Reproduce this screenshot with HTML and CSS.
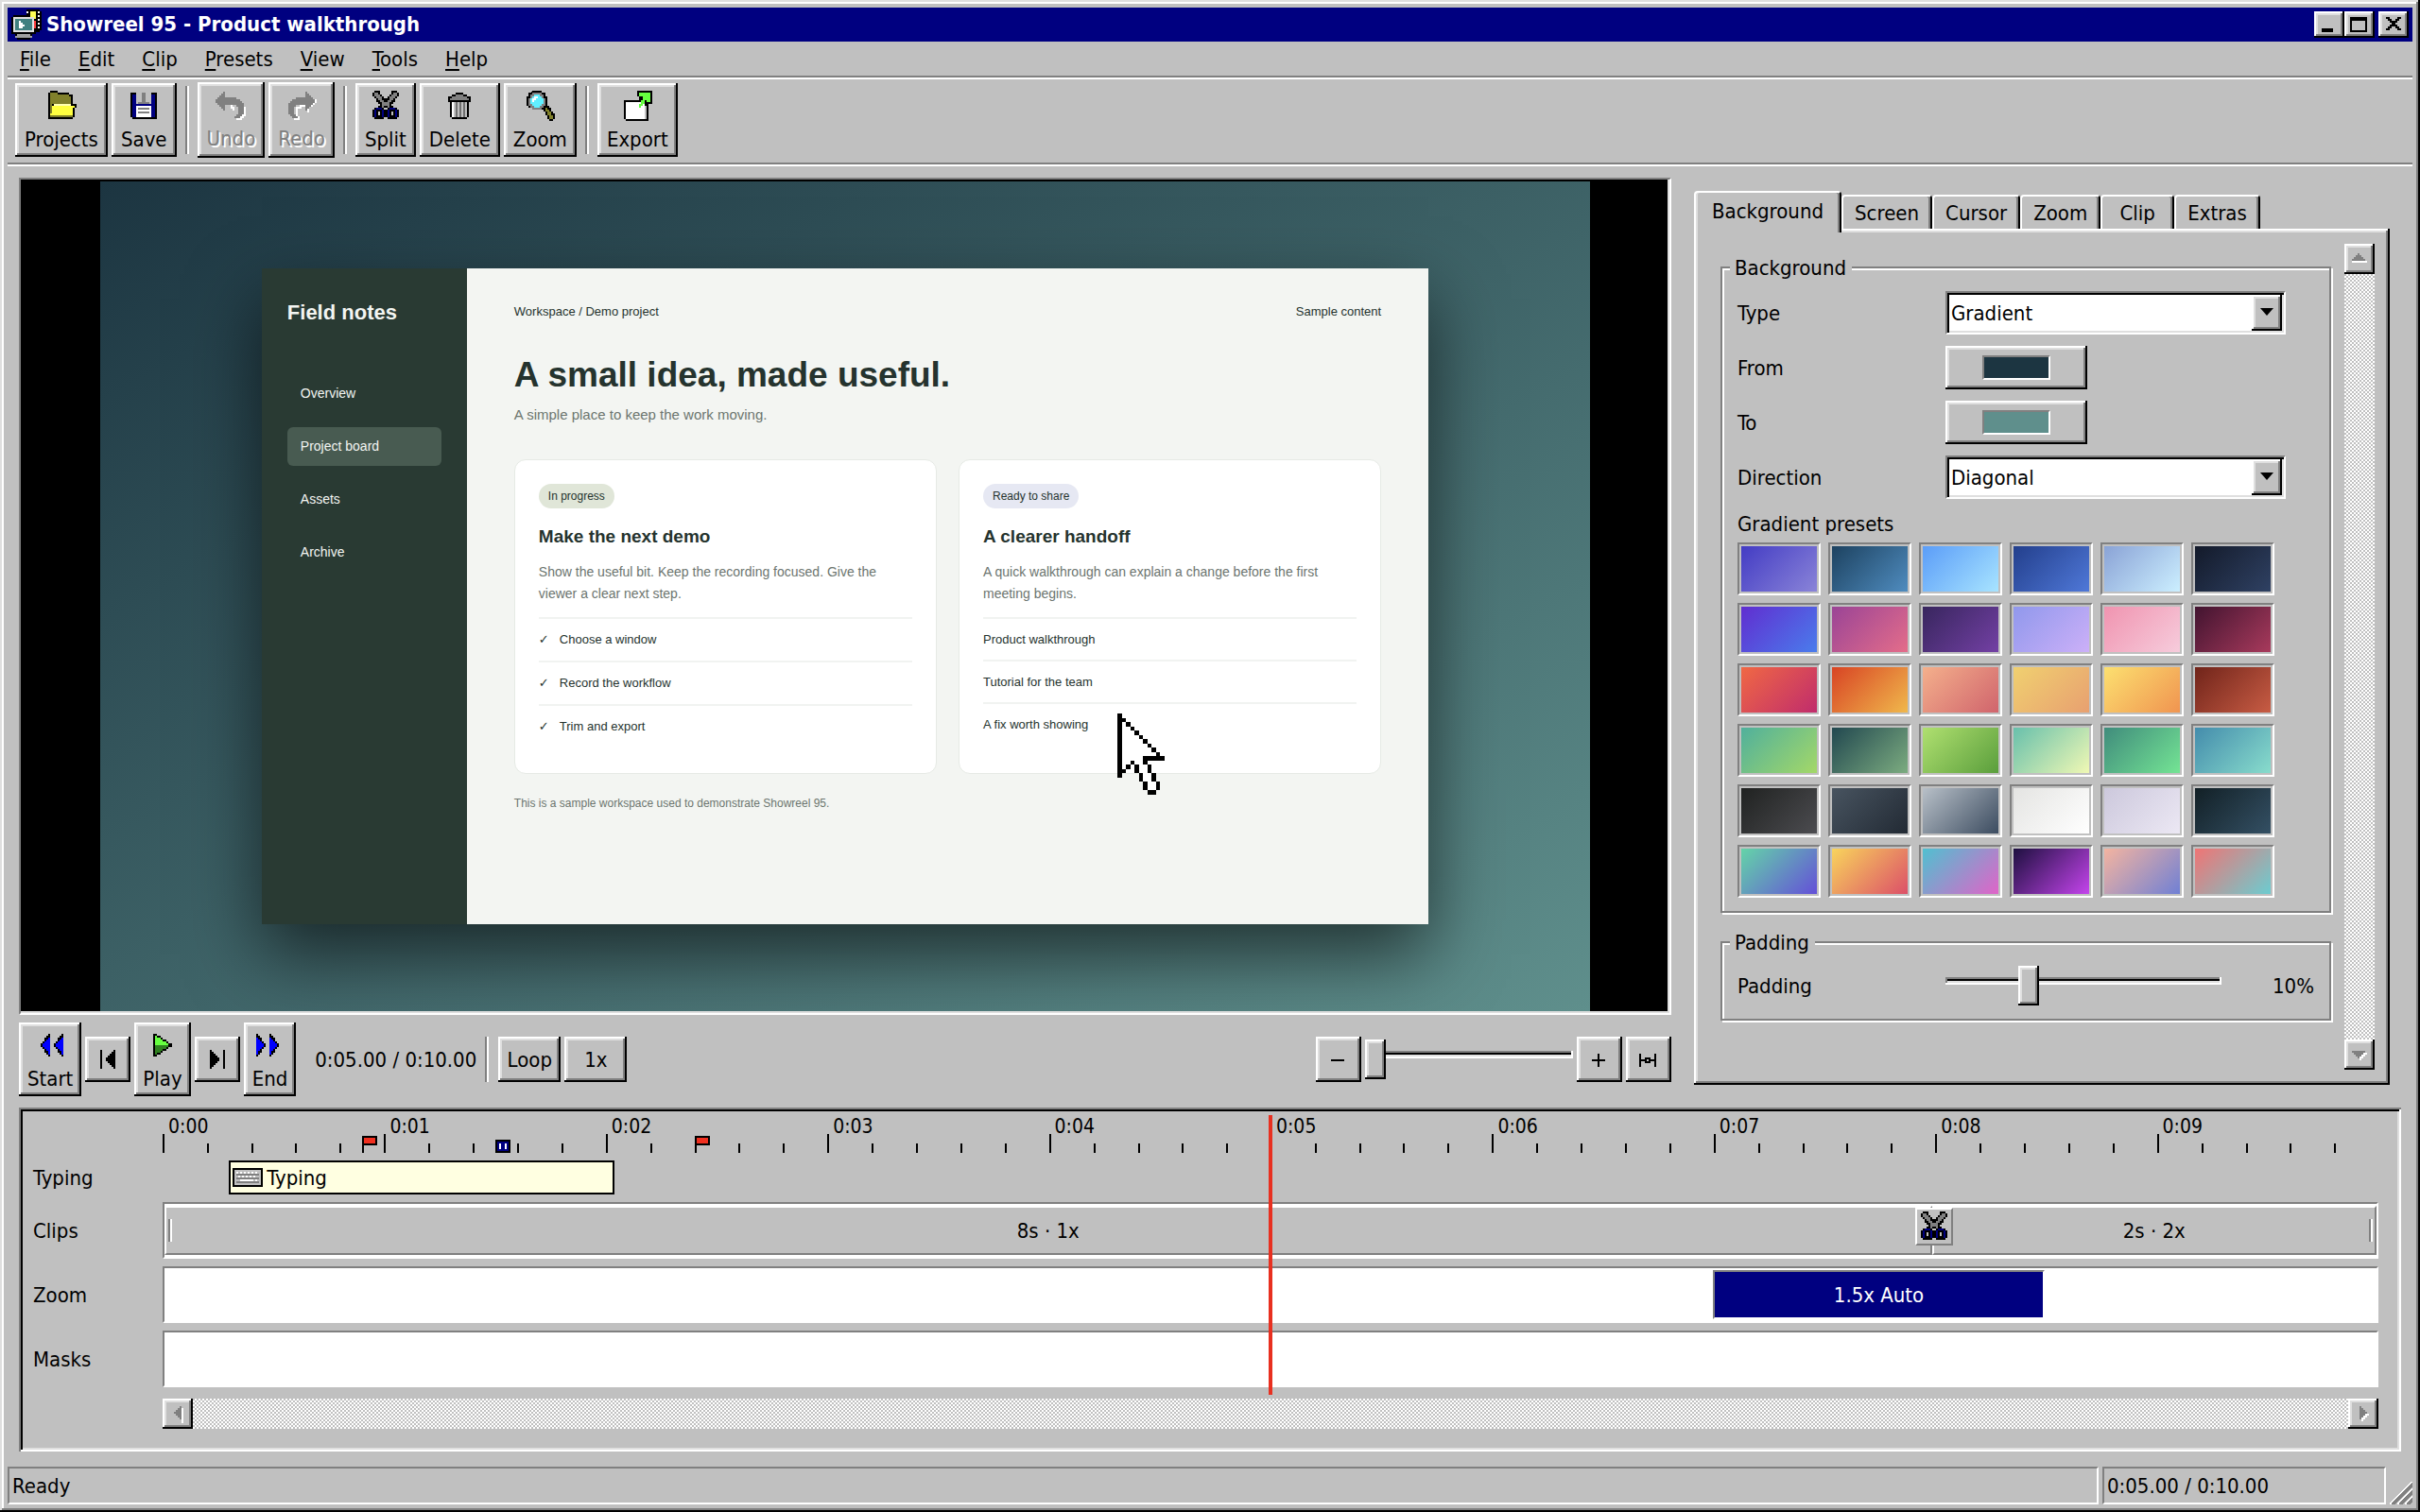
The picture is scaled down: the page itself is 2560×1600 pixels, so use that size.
FILE: index.html
```html
<!DOCTYPE html>
<html lang="en">
<head>
<meta charset="utf-8">
<title>Showreel 95 - Product walkthrough</title>
<link rel="stylesheet" href="styles.css">
</head>
<body>
<svg class="defs" aria-hidden="true">
  <symbol id="scissors" viewBox="0 0 16 16">
    <path fill="#000" d="M2 0h3v1h-3zM11 0h3v1h-3zM1 1h4v1h-4zM11 1h4v1h-4zM1 2h5v1h-5zM10 2h5v1h-5zM2 3h5v1h-5zM9 3h5v1h-5zM3 4h10v2h-10zM4 6h8v1h-8zM5 7h6v1h-6zM4 8h8v1h-8zM2 9h5v1h-5zM9 9h5v1h-5zM1 10h7v4h-7zM8 10h7v4h-7zM2 14h5v1h-5zM9 14h5v1h-5z"/>
    <path fill="#808080" d="M2 1h2v1h-2zM12 1h2v1h-2zM2 2h3v1h-3zM11 2h3v1h-3zM3 3h3v1h-3zM10 3h3v1h-3zM4 4h2v1h-2zM10 4h2v1h-2zM5 5h2v1h-2zM9 5h2v1h-2zM6 6h4v2h-4zM6 8h1v1h-1zM9 8h1v1h-1z"/>
    <path fill="#000080" d="M3 9h3v1h-3zM10 9h3v1h-3zM2 10h5v4h-5zM9 10h5v4h-5z"/>
    <path fill="#000" d="M3 10h3v4h-3zM10 10h3v4h-3z"/>
    <path fill="#c0c0c0" d="M4 11h1v2h-1zM11 11h1v2h-1z"/>
  </symbol>
</svg>
<div class="window">
  <header class="titlebar">
    <svg class="app-icon" viewBox="0 0 16 16" aria-hidden="true">
      <path fill="#000" d="M8 0h7v1h1v10h-1v1h-2v1h-2v2h-1v1h-7v-1h-1v-2h-2v-9h1v-1h7z"/>
      <path fill="#ffff55" d="M10 1h3v4h-3z"/>
      <path fill="#fff" d="M8 1h1v1h-1zM14 1h1v1h-1zM14 3h1v1h-1zM14 5h1v1h-1zM14 7h1v1h-1zM14 9h1v1h-1z"/>
      <path fill="#ff4040" d="M12 6h1v4h-1z"/>
      <path fill="#dfdfdf" d="M1 4h11v8h-11z"/>
      <path fill="#408080" d="M2 5h9v6h-9z"/>
      <path fill="#fff" d="M4 6h1v1h1v1h1v1h-1v1h-2z"/>
      <path fill="#a0a0a0" d="M3 13h7v1h-7zM2 14h9v1h-9z"/>
    </svg>
    <h1 class="window-title">Showreel 95 - Product walkthrough</h1>
    <button class="bevel caption-btn" aria-label="Minimize"><svg viewBox="0 0 16 14"><path d="M4 9h6v2h-6z"/></svg></button>
    <button class="bevel caption-btn" aria-label="Maximize"><svg viewBox="0 0 16 14"><path fill-rule="evenodd" d="M3 3h9v8h-9zM4 5v5h7v-5z"/></svg></button>
    <button class="bevel caption-btn caption-close" aria-label="Close"><svg viewBox="0 0 16 14"><path d="M4 3h2v1h1v1h2v-1h1v-1h2v1h-1v1h-1v1h-1v1h1v1h1v1h1v1h-2v-1h-1v-1h-2v1h-1v1h-2v-1h1v-1h1v-1h1v-1h-1v-1h-1v-1h-1z"/></svg></button>
  </header>

  <nav class="menubar" aria-label="Menu">
    <button><u>F</u>ile</button>
    <button><u>E</u>dit</button>
    <button><u>C</u>lip</button>
    <button><u>P</u>resets</button>
    <button><u>V</u>iew</button>
    <button><u>T</u>ools</button>
    <button><u>H</u>elp</button>
  </nav>

  <div class="toolbar" role="toolbar" aria-label="Main">
    <button class="bevel tool">
      <svg viewBox="0 0 16 16" aria-hidden="true"><path d="M1 1h1v-1h4v1h6v1h2v5h2v2h-1v5h-1v1h-13z"/><path fill="#80802b" d="M2 2v-1h4v1h6v1h1v4h-10v1h-1zM2 8h1v6h-1z"/><path fill="#ffff40" d="M3 8h12v1h-1v4h-12v-1h1z"/><path fill="#ffffb0" d="M4 7h9v1h-9z"/><path fill="#80802b" d="M2 13h12v1h-12z"/></svg>
      <span>Projects</span></button>
    <button class="bevel tool">
      <svg viewBox="0 0 16 16" aria-hidden="true"><path d="M1 1h14v14h-13v-1h-1z"/><path fill="#000080" d="M2 2h12v12h-12z"/><path fill="#c0c0c0" d="M4 1h8v6h-8z"/><path fill="#808080" d="M7 1h2v5h-2zM5 6h6v1h-6z"/><path fill="#fff" d="M4 8h8v6h-8z"/><path fill="#808080" d="M5 9h6v1h-6zM5 11h6v1h-6z"/></svg>
      <span>Save</span></button>
    <span class="divider"></span>
    <button class="bevel tool tool-off" disabled>
      <svg viewBox="0 0 16 16" aria-hidden="true"><path fill="#fff" d="M12 7h2v1h1v1h1v5h-1v1h-1v1h-3v-1h2v-1h1v-5h-2v-1h-3v1h1v2h-1v-1h-1v-2h2z"/><path fill="#808080" d="M4 1h1v3h6v1h2v1h1v1h1v6h-1v1h-1v1h-3v-1h1v-1h1v-4h-1v-1h-6v3h-1v-1h-1v-1h-1v-1h-1v-1h-1v-2h1v-1h1v-1h1v-1h1z"/></svg>
      <span>Undo</span></button>
    <button class="bevel tool tool-off" disabled>
      <svg viewBox="0 0 16 16" aria-hidden="true"><path fill="#fff" d="M15 5h1v2h-1v1h-1v1h-1v1h-1v2h-1v-3h-3v1h-2v4h1v2h-3v-1h1v-6h2v-1h4v2h2v-2z"/><path fill="#808080" d="M11 1h-1v3h-5v1h-2v1h-1v1h-1v6h1v1h1v1h3v-1h-1v-1h-1v-4h1v-1h5v3h1v-1h1v-1h1v-1h1v-1h1v-2h-1v-1h-1v-1h-1v-1h-1z"/></svg>
      <span>Redo</span></button>
    <span class="divider"></span>
    <button class="bevel tool"><svg aria-hidden="true"><use href="#scissors"/></svg><span>Split</span></button>
    <button class="bevel tool">
      <svg viewBox="0 0 16 16" aria-hidden="true"><path d="M6 1h4v1h2v1h2v3h-1v8h-1v1h-8v-1h-1v-8h-1v-3h2v-1h2z"/><path fill="#808080" d="M6 2h4v1h2v1h1v1h-10v-1h1v-1h2z"/><path fill="#c0c0c0" d="M4 6h8v8h-8z"/><path fill="#fff" d="M4 6h1v8h-1z"/><path fill="#707070" d="M6 6h1v8h-1zM8 6h1v8h-1zM10 6h1v8h-1z"/></svg>
      <span>Delete</span></button>
    <button class="bevel tool">
      <svg viewBox="0 0 16 16" aria-hidden="true"><path d="M4 0h5v1h2v2h1v5h1v1h1v2h1v1h1v3h-1v1h-2v-1h-1v-2h-1v-2h-1v-1h-6v-1h-2v-1h-1v-5h1v-2h1z"/><path fill="#808080" d="M4 1h5v1h1v2h1v4h-1v1h-1v1h-5v-1h-1v-1h-1v-4h1v-2h1z"/><path fill="#60f0ff" d="M5 2h3v1h1v1h1v3h-1v1h-1v1h-3v-1h-1v-1h-1v-3h1v-1h1z"/><path fill="#fff" d="M4 4h1v-1h2v1h-1v1h-1v1h-1z"/><path fill="#80802b" d="M11 9h1v1h1v1h1v2h1v2h-2v-2h-1v-2h-1z"/></svg>
      <span>Zoom</span></button>
    <span class="divider"></span>
    <button class="bevel tool">
      <svg viewBox="0 0 16 16" aria-hidden="true"><path d="M8 0h8v7h-2v9h-12v-1h-1v-10h8v-2h-1z"/><path fill="#fff" d="M2 6h10v9h-10z"/><path fill="#c0c0c0" d="M12 8h1v7h-1z"/><path fill="#66ff40" d="M9 1h6v5h-2v-1h-1v2h-1v1h-1v1h-1v-2h1v-2h1v-2h-2z"/></svg>
      <span>Export</span></button>
  </div>

  <main class="workspace">
    <section class="stage" aria-label="Preview">
      <div class="preview">
        <div class="video">
          <div class="demo">
            <aside class="demo-side">
              <strong>Field notes</strong>
              <ul><li>Overview</li><li class="on">Project board</li><li>Assets</li><li>Archive</li></ul>
            </aside>
            <div class="demo-main">
              <div class="crumbs"><span>Workspace / Demo project</span><span>Sample content</span></div>
              <h2>A small idea, made useful.</h2>
              <p class="lead">A simple place to keep the work moving.</p>
              <div class="cards">
                <article class="card">
                  <span class="chip">In progress</span>
                  <h3>Make the next demo</h3>
                  <p>Show the useful bit. Keep the recording focused. Give the viewer a clear next step.</p>
                  <ul class="checks"><li>Choose a window</li><li>Record the workflow</li><li>Trim and export</li></ul>
                </article>
                <article class="card">
                  <span class="chip chip-blue">Ready to share</span>
                  <h3>A clearer handoff</h3>
                  <p>A quick walkthrough can explain a change before the first meeting begins.</p>
                  <ul><li>Product walkthrough</li><li>Tutorial for the team</li><li>A fix worth showing</li></ul>
                </article>
              </div>
              <p class="foot">This is a sample workspace used to demonstrate Showreel 95.</p>
            </div>
          </div>
          <svg class="pointer" viewBox="0 0 11 19" aria-hidden="true">
            <path fill="#fff" d="M0 0h1v1h1v1h1v1h1v1h1v1h1v1h1v1h1v1h1v1h1v1h1v1h-4v1h1v2h1v2h1v2h-1v1h-2v-1h-1v-2h-1v-2h-1v-2h-1v1h-1v1h-1v1h-1z"/>
            <path d="M0 0h1v15h-1zM1 1h1v1h-1zM2 2h1v1h-1zM3 3h1v1h-1zM4 4h1v1h-1zM5 5h1v1h-1zM6 6h1v1h-1zM7 7h1v1h-1zM8 8h1v1h-1zM9 9h1v1h-1zM6 10h5v1h-5zM6 11h1v1h-1zM3 11h1v1h-1zM2 12h1v1h-1zM1 13h1v1h-1zM4 12h1v2h-1zM7 12h1v2h-1zM5 14h1v2h-1zM8 14h1v2h-1zM6 16h1v2h-1zM9 16h1v2h-1zM7 18h2v1h-2z"/>
          </svg>
        </div>
      </div>

      <div class="transport">
        <button class="bevel tool"><svg viewBox="0 0 16 16" aria-hidden="true"><path d="M7 2h1v12h-1v-1h-1v-1h-1v-2h-1v-1h-1v-2h1v-1h1v-2h1v-1h1zM14 2h1v12h-1v-1h-1v-1h-1v-2h-1v-1h-1v-2h1v-1h1v-2h1v-1h1z"/><path fill="#00f" d="M7 4h1v9h-1v-2h-1v-1h-1v-1h-1v-2h1v-1h1v-1h1zM14 4h1v9h-1v-2h-1v-1h-1v-1h-1v-2h1v-1h1v-1h1z"/></svg><span>Start</span></button>
        <button class="bevel step" aria-label="Previous frame"><svg viewBox="0 0 16 16"><path d="M4 3h1v10h-1zM11 3h1v10h-1v-1h-1v-1h-1v-1h-1v-1h-1v-2h1v-1h1v-1h1v-1h1z"/></svg></button>
        <button class="bevel tool"><svg viewBox="0 0 16 16" aria-hidden="true"><path d="M3 2h2v1h2v1h1v1h2v1h1v1h2v2h-2v1h-1v1h-2v1h-1v1h-2v1h-2z"/><path fill="#66ff40" d="M4 3h1v1h2v1h1v1h2v1h1v1h-7z"/><path fill="#2f8020" d="M4 8h7v1h-1v1h-2v1h-1v1h-2v1h-1z"/></svg><span>Play</span></button>
        <button class="bevel step" aria-label="Next frame"><svg viewBox="0 0 16 16"><path d="M11 3h1v10h-1zM4 3h1v1h1v1h1v1h1v1h1v2h-1v1h-1v1h-1v1h-1v1h-1z"/></svg></button>
        <button class="bevel tool"><svg viewBox="0 0 16 16" aria-hidden="true"><path d="M1 2h1v1h1v1h1v2h1v1h1v2h-1v1h-1v2h-1v1h-1v1h-1zM8 2h1v1h1v1h1v2h1v1h1v2h-1v1h-1v2h-1v1h-1v1h-1z"/><path fill="#00f" d="M1 4h1v1h1v1h1v1h1v2h-1v1h-1v1h-1v2h-1zM8 4h1v1h1v1h1v1h1v2h-1v1h-1v1h-1v2h-1z"/></svg><span>End</span></button>
        <output class="time">0:05.00 / 0:10.00</output>
        <span class="divider"></span>
        <button class="bevel wide">Loop</button>
        <button class="bevel wide">1x</button>
        <span class="spacer"></span>
        <button class="bevel step" aria-label="Zoom out timeline"><svg viewBox="0 0 16 16"><path d="M4 8h7v1h-7z"/></svg></button>
        <input class="slider" type="range" aria-label="Timeline zoom" min="0" max="100" value="0">
        <button class="bevel step" aria-label="Zoom in timeline"><svg viewBox="0 0 16 16"><path d="M4 8h7v1h-7zM7 5h1v7h-1z"/></svg></button>
        <button class="bevel step" aria-label="Fit timeline"><svg viewBox="0 0 16 16"><path fill-rule="evenodd" d="M3 5h1v3h2v-1h3v1h2v-3h1v7h-1v-3h-2v1h-3v-1h-2v3h-1zM7 8v1h1v-1z"/></svg></button>
      </div>
    </section>

    <section class="inspector" aria-label="Properties">
      <div class="tabs" role="tablist">
        <button role="tab" aria-selected="true" class="tab">Background</button>
        <button role="tab" aria-selected="false" class="tab">Screen</button>
        <button role="tab" aria-selected="false" class="tab">Cursor</button>
        <button role="tab" aria-selected="false" class="tab">Zoom</button>
        <button role="tab" aria-selected="false" class="tab">Clip</button>
        <button role="tab" aria-selected="false" class="tab">Extras</button>
      </div>
      <div class="bevel sheet" role="tabpanel">
        <div class="groups">
          <fieldset>
            <legend>Background</legend>
            <div class="field">
              <label for="type">Type</label>
              <span class="combo"><select id="type"><option>Gradient</option></select><span class="bevel combo-btn"></span></span>
            </div>
            <div class="field">
              <label for="from">From</label>
              <button id="from" class="bevel color-btn"><span style="background:#1c3541"></span></button>
            </div>
            <div class="field">
              <label for="to">To</label>
              <button id="to" class="bevel color-btn"><span style="background:#5f8f8c"></span></button>
            </div>
            <div class="field">
              <label for="direction">Direction</label>
              <span class="combo"><select id="direction"><option>Diagonal</option></select><span class="bevel combo-btn"></span></span>
            </div>
            <div class="presets">
              <span>Gradient presets</span>
              <div class="swatches">
                <button aria-label="Preset 1" style="--a:#433cc4;--b:#8a84d8"></button>
                <button aria-label="Preset 2" style="--a:#1d4260;--b:#4f8cbf"></button>
                <button aria-label="Preset 3" style="--a:#5b9df8;--b:#a8e4ff"></button>
                <button aria-label="Preset 4" style="--a:#233f8c;--b:#4f78d8"></button>
                <button aria-label="Preset 5" style="--a:#8aa3d6;--b:#ccefff"></button>
                <button aria-label="Preset 6" style="--a:#131a2a;--b:#2f4163"></button>
                <button aria-label="Preset 7" style="--a:#602ed0;--b:#4a7cec"></button>
                <button aria-label="Preset 8" style="--a:#9a4496;--b:#e46d8a"></button>
                <button aria-label="Preset 9" style="--a:#38265e;--b:#7340a4"></button>
                <button aria-label="Preset 10" style="--a:#9098ec;--b:#ccb0f8"></button>
                <button aria-label="Preset 11" style="--a:#f094b0;--b:#f6ccdc"></button>
                <button aria-label="Preset 12" style="--a:#421430;--b:#a83a5c"></button>
                <button aria-label="Preset 13" style="--a:#f06844;--b:#c02c6c"></button>
                <button aria-label="Preset 14" style="--a:#d84424;--b:#f0b84c"></button>
                <button aria-label="Preset 15" style="--a:#f4b08c;--b:#d0646c"></button>
                <button aria-label="Preset 16" style="--a:#f0d070;--b:#e8a070"></button>
                <button aria-label="Preset 17" style="--a:#fce070;--b:#f09450"></button>
                <button aria-label="Preset 18" style="--a:#70241a;--b:#c85c44"></button>
                <button aria-label="Preset 19" style="--a:#50b09c;--b:#a4d868"></button>
                <button aria-label="Preset 20" style="--a:#224850;--b:#7cac80"></button>
                <button aria-label="Preset 21" style="--a:#b0e070;--b:#5a9e3c"></button>
                <button aria-label="Preset 22" style="--a:#68c0ac;--b:#f0f8b4"></button>
                <button aria-label="Preset 23" style="--a:#408c7c;--b:#74e494"></button>
                <button aria-label="Preset 24" style="--a:#448cac;--b:#88dccc"></button>
                <button aria-label="Preset 25" style="--a:#202221;--b:#4c4c50"></button>
                <button aria-label="Preset 26" style="--a:#485460;--b:#222a34"></button>
                <button aria-label="Preset 27" style="--a:#b8c0c8;--b:#3c4c60"></button>
                <button aria-label="Preset 28" style="--a:#e4e4e2;--b:#ffffff"></button>
                <button aria-label="Preset 29" style="--a:#ccc8dc;--b:#ece8f4"></button>
                <button aria-label="Preset 30" style="--a:#122026;--b:#345064"></button>
                <button aria-label="Preset 31" style="--a:#64d4a8;--b:#6450d8"></button>
                <button aria-label="Preset 32" style="--a:#f8d45c;--b:#dc5068"></button>
                <button aria-label="Preset 33" style="--a:#50c0d0;--b:#e064c8"></button>
                <button aria-label="Preset 34" style="--a:#1e1040;--b:#c444ec"></button>
                <button aria-label="Preset 35" style="--a:#f4b4a0;--b:#7080d4"></button>
                <button aria-label="Preset 36" style="--a:#f07474;--b:#6cccd0"></button>
              </div>
            </div>
          </fieldset>
          <fieldset>
            <legend>Padding</legend>
            <div class="field">
              <label for="padding">Padding</label>
              <input id="padding" class="slider" type="range" min="0" max="35" value="10">
              <output for="padding">10%</output>
            </div>
          </fieldset>
        </div>
        <div class="scroll scroll-y">
          <button class="bevel" aria-label="Scroll up" disabled><svg viewBox="0 0 16 16"><path fill="#fff" d="M4 9h8v1h-8z"/><path fill="#808080" d="M7 5h1v1h1v1h1v1h1v1h-7v-1h1v-1h1v-1h1z"/></svg></button>
          <button class="bevel" aria-label="Scroll down" disabled><svg viewBox="0 0 16 16"><path fill="#fff" d="M5 7h7v1h-1v1h-1v1h-1v1h-1v-1z"/><path fill="#808080" d="M4 6h7v1h-1v1h-1v1h-1v1h-1v-1h-1v-1h-1v-1h-1z"/></svg></button>
        </div>
      </div>
    </section>
  </main>

  <section class="timeline" aria-label="Timeline">
    <div class="ruler">
      <span>0:00</span><span>0:01</span><span>0:02</span><span>0:03</span><span>0:04</span><span>0:05</span><span>0:06</span><span>0:07</span><span>0:08</span><span>0:09</span>
      <svg class="flag" style="left:9%" viewBox="0 0 8 9" aria-hidden="true"><path d="M0 0h8v5h-7v4h-1z"/><path fill="#f03020" d="M1 1h6v3h-6z"/></svg>
      <svg class="flag" style="left:24%" viewBox="0 0 8 9" aria-hidden="true"><path d="M0 0h8v5h-7v4h-1z"/><path fill="#f03020" d="M1 1h6v3h-6z"/></svg>
      <svg class="pause" style="left:15%" viewBox="0 0 8 7" aria-hidden="true"><path d="M0 0h8v7h-8z"/><path fill="#000080" d="M1 1h6v5h-6z"/><path fill="#fff" d="M2 2h1v3h-1zM5 2h1v3h-1z"/></svg>
    </div>

    <span class="lane-name">Typing</span>
    <div class="lane-open">
      <div class="typing" style="margin-left:3%;width:17.4%">
        <svg viewBox="0 0 16 10" aria-hidden="true"><path d="M0 0h16v10h-16z"/><path fill="#c0c0c0" d="M1 1h14v8h-14z"/><path fill="#808080" d="M2 3h12v1h-12zM2 5h12v1h-12zM2 7h12v1h-12z"/><path fill="#fff" d="M2 2h1v1h-1zM4 2h1v1h-1zM6 2h1v1h-1zM8 2h1v1h-1zM10 2h1v1h-1zM12 2h1v1h-1zM3 4h1v1h-1zM5 4h1v1h-1zM7 4h1v1h-1zM9 4h1v1h-1zM11 4h1v1h-1zM4 6h7v1h-7zM12 6h1v1h-1z"/></svg>
        <span>Typing</span>
      </div>
    </div>

    <span class="lane-name">Clips</span>
    <div class="lane lane-clips">
      <div class="clip" style="flex-grow:8"><i class="grip"></i><span>8s · 1x</span></div>
      <div class="clip" style="flex-grow:2"><button class="cut" aria-label="Cut at 8 seconds"><svg aria-hidden="true"><use href="#scissors"/></svg></button><span>2s · 2x</span><i class="grip grip-end"></i></div>
    </div>

    <span class="lane-name">Zoom</span>
    <div class="lane">
      <div class="zoom-clip" style="margin-left:70%;width:15%">1.5x Auto</div>
    </div>

    <span class="lane-name">Masks</span>
    <div class="lane"></div>

    <div class="scroll scroll-x">
      <button class="bevel" aria-label="Scroll left" disabled><svg viewBox="0 0 16 16"><path fill="#fff" d="M10 5h1v8h-1z"/><path fill="#808080" d="M9 4h1v7h-1v-1h-1v-1h-1v-1h-1v-1h1v-1h1v-1h1z"/></svg></button>
      <button class="bevel" aria-label="Scroll right" disabled><svg viewBox="0 0 16 16"><path fill="#fff" d="M7 12h1v-1h1v-1h1v-1h1v-1h-1v-1h-3z"/><path fill="#808080" d="M6 4h1v1h1v1h1v1h1v1h-1v1h-1v1h-1v1h-1z"/></svg></button>
    </div>
    <div class="playhead-layer"><i class="playhead" style="left:50%"></i></div>
  </section>

  <footer class="statusbar">
    <span class="status-text">Ready</span>
    <span class="status-time">0:05.00 / 0:10.00</span>
    <svg class="resize" viewBox="0 0 12 12" aria-hidden="true"><path stroke="#fff" d="M0 12L12 0M4 12L12 4M8 12L12 8"/><path stroke="#808080" d="M1 12L12 1M2 12L12 2M5 12L12 5M6 12L12 6M9 12L12 9M10 12L12 10"/></svg>
  </footer>
</div>
</body>
</html>
```
FILE: styles.css
```css
:root {
  --face: #c0c0c0;
  --light: #dfdfdf;
  --shade: #808080;
  --navy: #000080;
}

* { box-sizing: border-box; }

body {
  margin: 0;
  background: var(--face);
  color: #000;
  font: 22px/28px "DejaVu Sans Condensed", Tahoma, "Noto Sans", sans-serif;
}

button, input, select, output { font: inherit; color: inherit; }
button { margin: 0; border: 0; padding: 0; background: none; }
h1, h2, h3, p, ul { margin: 0; padding: 0; font-size: inherit; }
ul { list-style: none; }
svg { display: block; shape-rendering: crispEdges; }
.defs { display: none; }

.window {
  display: flex;
  flex-direction: column;
  min-height: 100vh;
  padding: 8px;
  box-shadow: inset -2px -2px #000, inset 2px 2px var(--light), inset -4px -4px var(--shade), inset 4px 4px #fff;
}

.bevel {
  background: var(--face);
  box-shadow: inset -2px -2px #000, inset 2px 2px #fff, inset -4px -4px var(--shade), inset 4px 4px var(--light);
}

.divider {
  width: 4px;
  border-left: 2px solid var(--shade);
  border-right: 2px solid #fff;
}

/* Title bar */
.titlebar {
  display: flex;
  align-items: center;
  height: 36px;
  padding: 0 4px;
  background: var(--navy);
  color: #fff;
}
.app-icon { width: 32px; height: 32px; }
.window-title { flex: 1; padding-left: 5px; font-weight: bold; }
.caption-btn { width: 32px; height: 28px; }
.caption-btn svg { width: 32px; height: 28px; }
.caption-close { margin-left: 4px; }

/* Menu bar */
.menubar {
  display: flex;
  height: 40px;
  border-bottom: 2px solid #fff;
  box-shadow: inset 0 -2px var(--shade);
}
.menubar button { padding: 0 16px 0 13px; }
.menubar u { text-underline-offset: 3px; text-decoration-thickness: 2px; }

/* Toolbar */
.toolbar {
  display: flex;
  align-items: center;
  gap: 4px;
  height: 92px;
  padding: 0 8px 4px;
  border-bottom: 2px solid #fff;
  box-shadow: inset 0 -2px var(--shade);
}
.toolbar .divider { height: 72px; margin: 0 5px; }
.tool {
  display: flex;
  flex-direction: column;
  align-items: center;
  gap: 6px;
  height: 78px;
  padding: 8px 10px 0;
}
.tool svg { width: 32px; height: 32px; }
.tool-off { height: 80px; color: var(--shade); text-shadow: 2px 2px #fff; }

/* Workspace */
.workspace {
  display: grid;
  grid-template-columns: minmax(0, 1fr) 736px;
  gap: 24px;
  flex: 1;
  padding: 12px 24px 12px 12px;
}
.stage { display: flex; flex-direction: column; gap: 8px; }
.preview {
  display: flex;
  justify-content: center;
  flex: 1;
  border: 2px solid;
  border-color: var(--shade) #fff #fff var(--shade);
  padding: 2px;
  background: #000;
  box-shadow: inset -2px -2px var(--light);
}
.video {
  position: relative;
  display: grid;
  place-content: center;
  grid-template: 79% / 78.3%;
  width: 90.6%;
  background: linear-gradient(to bottom right, #1c3541, #5f8f8c);
  overflow: hidden;
}
.demo {
  display: grid;
  grid-template-columns: 217px 1fr;
  background: #f3f5f2;
  color: #25332e;
  font: 13px/20px "Liberation Sans", Arial, sans-serif;
  box-shadow: 0 32px 72px rgba(0, 0, 0, .6);
}
.demo-side { padding: 32px 27px; background: #293a33; color: #f3f5f2; }
.demo-side strong { font-size: 22px; line-height: 30px; }
.demo-side ul { display: grid; gap: 15px; margin-top: 50px; font-size: 14px; line-height: 41px; }
.demo-side li { padding-left: 14px; border-radius: 6px; }
.demo-side .on { background: #485b51; }
.demo-main { padding: 36px 50px; }
.crumbs { display: flex; justify-content: space-between; }
.demo h2 { margin-top: 34px; font-size: 37px; line-height: 46px; }
.lead { margin-top: 9px; font-size: 15px; line-height: 20px; color: #6c756f; }
.cards { display: grid; grid-template-columns: 1fr 1fr; gap: 23px; margin-top: 37px; }
.card {
  height: 333px;
  padding: 25px;
  border: 1px solid #e6eae5;
  border-radius: 12px;
  background: #fff;
}
.chip {
  display: inline-block;
  padding: 0 10px;
  border-radius: 13px;
  background: #e0e6d8;
  font-size: 12px;
  line-height: 26px;
}
.chip-blue { background: #e6e8f3; }
.card h3 { margin-top: 16px; font-size: 19px; line-height: 28px; }
.card p { margin-top: 12px; font-size: 14px; line-height: 23px; color: #6c756f; }
.card ul { margin-top: 13px; }
.card li { border-top: 2px solid #f1f3f1; line-height: 43px; }
.checks li::before {
  content: "✓";
  display: inline-block;
  width: 22px;
  font-family: "DejaVu Sans", sans-serif;
  font-weight: bold;
  line-height: 20px;
}
.card .checks li { line-height: 44px; }
.foot { margin-top: 21px; font-size: 12px; color: #6c756f; }
.pointer { position: absolute; left: 68.3%; top: 64.1%; width: 50px; height: 86px; }

.transport { display: flex; align-items: center; gap: 4px; height: 78px; }
.transport .tool { padding: 8px 9px 0; }
.step { width: 48px; height: 48px; }
.step svg { width: 32px; height: 32px; margin: 0 auto; }
.time { padding: 2px 5px 0 16px; }
.transport .divider { height: 48px; margin-right: 6px; }
.wide { width: 66px; height: 48px; padding-top: 2px; }
.spacer { flex: 1; }
.transport .slider { width: 220px; }

.slider { appearance: none; height: 42px; margin: 0; padding: 0 0 10px; background: none; }
.slider::-webkit-slider-runnable-track {
  height: 8px;
  background: var(--light);
  box-shadow: inset -2px -2px #fff, inset 2px 2px var(--shade), inset 0 4px #000;
}
.slider::-webkit-slider-thumb {
  appearance: none;
  width: 22px;
  height: 42px;
  margin-top: -12px;
  background: var(--face);
  box-shadow: inset -2px -2px #000, inset 2px 2px #fff, inset -4px -4px var(--shade), inset 4px 4px var(--light);
}

/* Inspector */
.inspector { display: flex; flex-direction: column; padding: 14px 0 12px; }
.tabs { display: flex; align-items: flex-end; height: 40px; }
.tab {
  min-width: 78px;
  height: 36px;
  padding: 2px 12px 0;
  border: solid;
  border-width: 2px 2px 0;
  border-color: #fff #000 #000 #fff;
  border-radius: 4px 4px 0 0;
  background: var(--face);
  box-shadow: inset -2px 0 var(--shade);
}
.tab[aria-selected="true"] {
  position: relative;
  height: 44px;
  margin-bottom: -4px;
  padding: 0 17px 3px;
  box-shadow: inset -2px 0 var(--shade), inset 2px 0 var(--light);
}
.sheet { display: flex; gap: 12px; flex: 1; padding: 16px 16px 16px 28px; }
.groups { flex: 1; display: flex; flex-direction: column; gap: 17px; padding-top: 11px; }
fieldset {
  display: flex;
  flex-direction: column;
  gap: 12px;
  min-width: 0;
  margin: 0 2px 0 0;
  padding: 11px 14px 14px 16px;
  border: 2px solid var(--shade);
  box-shadow: inset 2px 2px #fff, 2px 2px #fff;
}
legend { margin-left: -8px; padding: 2px 6px 0 5px; background: var(--face); line-height: 26px; }
.field { display: flex; align-items: center; min-height: 42px; }
.field label { width: 220px; padding-top: 2px; }
.field output { flex: 1; padding: 2px 2px 0 0; text-align: right; }
.field .slider { width: 292px; }
.combo { position: relative; width: 360px; }
.combo select {
  appearance: none;
  display: block;
  width: 100%;
  height: 46px;
  padding: 2px 0 0 4px;
  border: 2px solid;
  border-color: var(--shade) #fff #fff var(--shade);
  border-radius: 0;
  background: #fff;
  box-shadow: inset 2px 2px #000, inset -2px -2px var(--light);
}
.combo-btn {
  position: absolute;
  top: 4px;
  right: 4px;
  width: 32px;
  height: 38px;
  pointer-events: none;
}
.combo-btn::after {
  content: "";
  display: block;
  width: 14px;
  height: 8px;
  margin: 14px auto 0;
  background: #000;
  clip-path: polygon(0 0, 100% 0, 50% 100%);
}
.color-btn { width: 150px; height: 46px; }
.color-btn span {
  display: block;
  width: 72px;
  height: 26px;
  margin: 0 auto;
  border: 2px solid;
  border-color: var(--shade) #fff #fff var(--shade);
}
.presets { display: flex; flex-direction: column; gap: 6px; }
.presets > span { padding-top: 2px; line-height: 26px; }
.swatches { display: grid; grid-template-columns: repeat(6, 88px); gap: 8px; }
.swatches button {
  height: 56px;
  border: 2px solid;
  border-color: var(--shade) #fff #fff var(--shade);
  padding: 2px;
  background: linear-gradient(135deg, var(--a), var(--b)) content-box;
}

/* Scroll bars */
.scroll {
  display: flex;
  justify-content: space-between;
  background: repeating-conic-gradient(#fff 0 25%, var(--face) 0 50%) 0 0 / 4px 4px;
}
.scroll button { width: 32px; height: 32px; }
.scroll svg { width: 32px; height: 32px; }
.scroll-y { flex-direction: column; width: 32px; }
.scroll-x { grid-column: 2; margin-top: 4px; }

/* Timeline */
.timeline {
  display: grid;
  grid-template-columns: 137px minmax(0, 1fr);
  row-gap: 8px;
  margin: 0 12px;
  padding: 4px 24px 24px 15px;
  box-shadow: inset 2px 2px var(--shade), inset -2px -2px #fff, inset 4px 4px #000, inset -4px -4px var(--light);
}
.ruler {
  position: relative;
  grid-column: 2;
  display: grid;
  grid-template-columns: repeat(10, 1fr);
  height: 44px;
}
.ruler span {
  padding: 2px 0 0 6px;
  font-size: 21px;
  line-height: 28px;
  background:
    linear-gradient(#000, #000) 0 100% / 2px 20px,
    repeating-linear-gradient(90deg, #000 0 2px, transparent 2px 20%) 0 100% / 100% 10px;
  background-repeat: no-repeat;
}
.flag, .pause { position: absolute; bottom: 0; width: 16px; }
.flag { height: 18px; }
.pause { height: 14px; }
.lane-name { align-self: center; padding-top: 2px; }
.lane-open { height: 36px; }
.typing {
  display: flex;
  align-items: center;
  gap: 4px;
  height: 36px;
  padding-left: 2px;
  border: 2px solid #000;
  background: #ffffe1;
}
.typing svg { width: 32px; height: 20px; }
.typing span { padding-top: 2px; }
.lane {
  height: 60px;
  padding: 2px 0;
  border: 2px solid;
  border-color: var(--shade) #fff #fff var(--shade);
  background: #fff;
}
.lane-clips { display: flex; }
.clip {
  position: relative;
  display: grid;
  place-content: center;
  flex-basis: 0;
  border: 2px solid;
  border-color: #fff var(--shade) var(--shade) #fff;
  background: var(--face);
}
.clip span { padding-top: 2px; }
.grip {
  position: absolute;
  top: 12px;
  left: 2px;
  width: 4px;
  height: 24px;
  border-left: 2px solid var(--shade);
  border-right: 2px solid #fff;
}
.grip-end { left: auto; right: 2px; }
.cut {
  position: absolute;
  left: -20px;
  top: 0;
  width: 40px;
  height: 40px;
  border: 2px solid;
  border-color: #fff var(--shade) var(--shade) #fff;
  background: var(--face);
}
.cut svg { width: 32px; height: 32px; margin: 0 auto; }
.zoom-clip {
  height: 52px;
  border: 2px solid;
  border-color: var(--shade) #fff #fff var(--shade);
  background: var(--navy);
  color: #fff;
  line-height: 50px;
  text-align: center;
}
.playhead-layer { position: relative; grid-column: 2; grid-row: 1 / 6; pointer-events: none; }
.playhead { position: absolute; top: 4px; bottom: -8px; width: 4px; margin-left: -2px; background: #e83020; }
.ruler { grid-row: 1; }
.lane-open, .lane { grid-column: 2; }
.lane-name { grid-column: 1; }
.lane-name:nth-of-type(1), .lane-open { grid-row: 2; }
.lane-name:nth-of-type(2), .lane-clips { grid-row: 3; }
.lane-name:nth-of-type(3), .lane-name:nth-of-type(3) + .lane { grid-row: 4; }
.lane-name:nth-of-type(4), .lane-name:nth-of-type(4) + .lane { grid-row: 5; }
.scroll-x { grid-row: 6; }

/* Status bar */
.statusbar { display: flex; gap: 4px; margin-top: 16px; }
.status-text, .status-time {
  height: 40px;
  padding: 5px 3px 0;
  border: 2px solid;
  border-color: var(--shade) #fff #fff var(--shade);
}
.status-text { flex: 1; }
.status-time { width: 300px; }
.resize { align-self: flex-end; width: 24px; height: 24px; fill: none; }
```
